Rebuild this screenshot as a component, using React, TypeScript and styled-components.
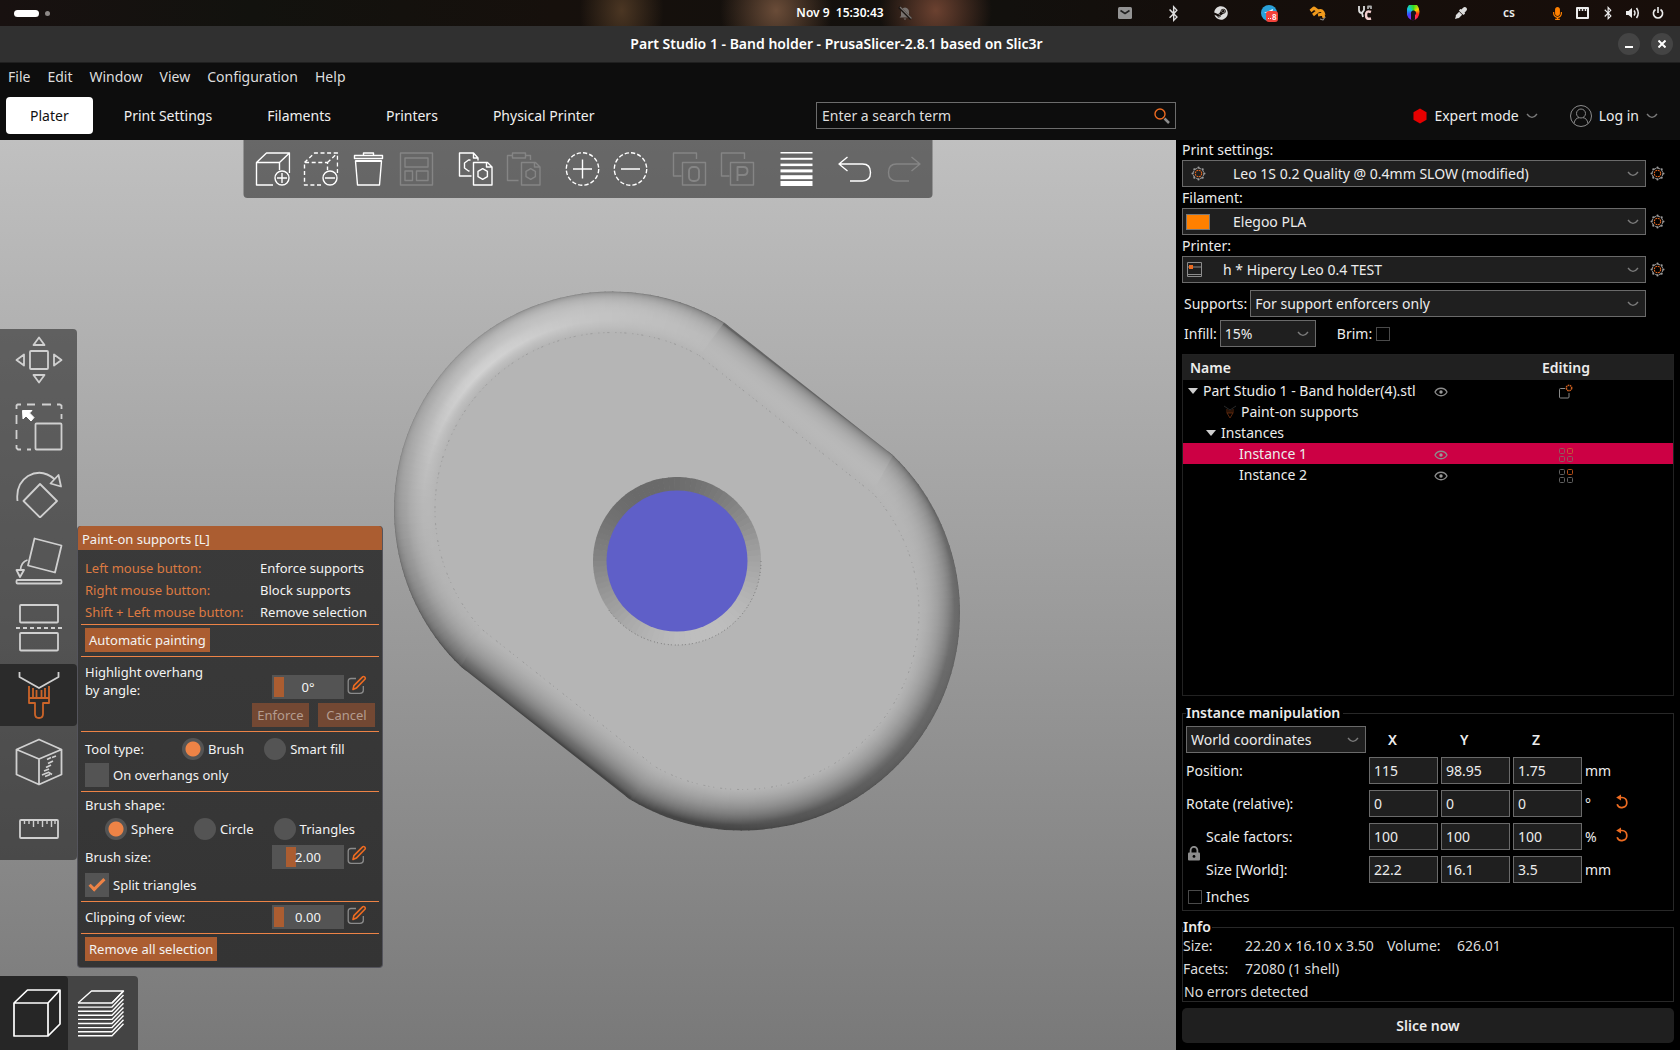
import React, { useState } from "react";
import styled, { createGlobalStyle, css } from "styled-components";
import { FaBluetoothB, FaEyeDropper, FaMicrophone, FaSteam } from "react-icons/fa";

const GlobalStyle = createGlobalStyle`
  *, *::before, *::after { box-sizing: border-box; }
  body { margin: 0; background: #000; }
  body, button, input, select, table {
    font-family: "Noto Sans", "Open Sans", sans-serif;
    font-size: 14px;
    line-height: 20px;
    color: #ececec;
  }
  button { border: 0; padding: 0; background: none; cursor: pointer; }
`;

const accent = "#ed6b21";

/* ------------------------------------------------------------------ shell */

const Shell = styled.div`
  height: 100vh;
  display: grid;
  grid-template-rows: 26px 37px 28px 49px minmax(0, 1fr);
  background: #0d0d0d;
  overflow: hidden;
`;

const StatusBar = styled.header`
  display: grid;
  grid-template-columns: 1fr auto 1fr;
  align-items: center;
  background:
    radial-gradient(ellipse 42px 60px at 37% 40%, #4b3623 0, transparent 100%),
    radial-gradient(ellipse 56px 60px at 46.2% 40%, #6a4c38 0, transparent 100%),
    radial-gradient(ellipse 56px 60px at 55.7% 40%, #6b4130 0, transparent 100%),
    linear-gradient(90deg, #181110 0, #12120e 15%, #16100c 33%, #12100d 60%, #140e0b 70%, #180e0a 100%);
`;

const Workspaces = styled.div`
  display: flex;
  align-items: center;
  gap: 6px;
  padding-left: 14px;
`;

const WorkspaceDot = styled.span<{ $active?: boolean }>`
  width: ${(p) => (p.$active ? 25 : 5)}px;
  height: ${(p) => (p.$active ? 7 : 5)}px;
  border-radius: 4px;
  background: ${(p) => (p.$active ? "#fff" : "#8d8987")};
`;

const Clock = styled.time`
  font-size: 12px;
  font-weight: 600;
  white-space: pre;
  color: #fff;
`;

const StatusRight = styled.div`
  display: flex;
  align-items: center;
  padding: 0 10px 0 14px;
`;

const Tray = styled.div`
  display: grid;
  grid-auto-flow: column;
  grid-auto-columns: 48px;
  margin: 0 12px 0 auto;
  justify-items: center;
  align-items: center;
  font-size: 12px;
  font-weight: 600;
`;

const ColorWheel = styled.span`
  width: 13px;
  height: 17px;
  background:
    radial-gradient(circle at 50% 47%, #15151a 2px, transparent 3px),
    linear-gradient(#15151a, #15151a) 50% 100% / 4px 9px no-repeat,
    conic-gradient(from 180deg at 50% 40%, #b012f0, #3848ff, #11c9e0, #35e01e, #f5d800, #ff2a1a, #ff2a80);
  clip-path: ellipse(50% 50% at 50% 42%);
`;

const SystemIcons = styled.div`
  display: grid;
  grid-auto-flow: column;
  grid-auto-columns: 25px;
  justify-items: center;
  align-items: center;
`;

const TitleBar = styled.div`
  display: grid;
  grid-template-columns: 1fr auto 1fr;
  align-items: center;
  padding-right: 7px;
  background: #303030;
  border-bottom: 1px solid #1f1f1f;
`;

const WindowTitle = styled.h1`
  grid-column: 2;
  margin: 0;
  font-size: 14px;
  line-height: 20px;
  font-weight: 600;
  color: #fff;
`;

const WindowButtons = styled.div`
  display: flex;
  justify-content: flex-end;
  gap: 11px;
`;

const WindowButton = styled.button`
  width: 22px;
  height: 22px;
  border-radius: 50%;
  background: #444;
  display: grid;
  place-items: center;
`;

const MenuBar = styled.nav`
  display: flex;
  align-items: center;
  gap: 17px;
  padding-left: 8px;
`;

const MenuButton = styled.button`
  color: #ddd;
`;

const TabBar = styled.div`
  display: grid;
  grid-template-columns: minmax(0, 1fr) 360px 504px;
  align-items: center;
`;

const Tabs = styled.div`
  display: flex;
  gap: 7px;
  padding-left: 6px;
`;

const Tab = styled.button<{ $active?: boolean }>`
  height: 37px;
  padding: 0 24px;
  border-radius: 4px;
  color: ${(p) => (p.$active ? "#111" : "#f0f0f0")};
  background: ${(p) => (p.$active ? "#fff" : "transparent")};
  white-space: nowrap;
`;

const SearchBox = styled.label`
  display: flex;
  align-items: center;
  height: 27px;
  padding: 0 5px;
  border: 1px solid #6c6c6c;
`;

const SearchInput = styled.input`
  flex: 1;
  min-width: 0;
  border: 0;
  padding: 0;
  outline: 0;
  background: none;
  &::placeholder { color: #dedede; opacity: 1; }
`;

const ModeArea = styled.div`
  display: flex;
  justify-content: flex-end;
  gap: 32px;
  padding-right: 22px;
`;

const ModeButton = styled.button`
  display: flex;
  align-items: center;
  gap: 7px;
`;

const Main = styled.main`
  display: grid;
  grid-template-columns: minmax(0, 1fr) 504px;
  min-height: 0;
`;

/* --------------------------------------------------------------- 3D scene */

const Scene = styled.section`
  position: relative;
  background: linear-gradient(#c0c0c0, #797979);
  overflow: hidden;
`;

const ModelSvg = styled.svg`
  display: block;
  width: 100%;
  height: 100%;
`;

const Overlay = styled.div`
  position: absolute;
  inset: 0;
`;

const TopTools = styled.div`
  position: absolute;
  top: 0;
  left: 50%;
  transform: translateX(-50%);
  display: flex;
  gap: 11px;
  height: 58px;
  padding: 0 5px;
  border-radius: 0 0 4px 4px;
  background: rgba(0, 0, 0, 0.46);
`;

const ToolGroup = styled.div`
  display: flex;
`;

const TopTool = styled.button`
  width: 48px;
  display: grid;
  place-items: center;
  color: #fff;
  &:disabled { color: #858585; }
`;

const LeftTools = styled.div`
  position: absolute;
  left: 0;
  top: 189px;
  width: 77px;
  display: flex;
  flex-direction: column;
  gap: 5px;
  border-radius: 0 4px 4px 0;
  background: rgba(0, 0, 0, 0.46);
`;

const LeftTool = styled.button<{ $active?: boolean }>`
  height: 62px;
  display: grid;
  place-items: center;
  border-radius: 0 4px 4px 0;
  color: #d0d0d0;
  background: ${(p) => (p.$active ? "#2b2b2b" : "transparent")};
`;

const ViewTools = styled.div`
  position: absolute;
  left: 0;
  bottom: 0;
  display: flex;
  height: 74px;
  border-radius: 0 4px 0 0;
  background: #444;
`;

const ViewTool = styled.button<{ $active?: boolean }>`
  width: ${(p) => (p.$active ? 68 : 70)}px;
  padding: ${(p) => (p.$active ? "0 0 0 6px" : "0 4px 0 0")};
  display: grid;
  place-items: center;
  color: #fff;
  border-radius: 0 4px 0 0;
  background: ${(p) => (p.$active ? "#262626" : "transparent")};
`;

/* ---------------------------------------------------- paint-on tool window */

const PaintWindow = styled.section`
  position: absolute;
  left: 77px;
  top: 386px;
  width: 306px;
  border: 1px solid #54545c;
  border-top: 0;
  border-radius: 4px;
  background: linear-gradient(#3a3a3a, #343434);
  overflow: hidden;
  padding-bottom: 2px;
  &, button { font-size: 13px; line-height: 18px; color: #f3f3f3; }
`;

const PaintTitle = styled.h2`
  margin: 0 0 7px;
  padding: 4px 4px 2px;
  font-size: 13px;
  line-height: 18px;
  font-weight: 400;
  background: #ab5d31;
`;

const PaintBlock = styled.div<{ $tight?: boolean }>`
  margin: 0 3px;
  padding: ${(p) => (p.$tight ? "0 4px 1px" : "3px 4px 4px")};
  border-bottom: 1px solid #ed8346;
  &:last-child { border-bottom: 0; }
`;

const Hints = styled.dl`
  display: grid;
  grid-template-columns: 175px 1fr;
  margin: 0;
  line-height: 22px;
  dt { color: #dd7a42; }
  dd { margin: 0; }
`;

const PaintButton = styled.button<{ $w?: number }>`
  height: 24px;
  min-width: ${(p) => p.$w ?? 0}px;
  padding: 0 4px;
  background: #ab5d31;
  && { line-height: 24px; }
  &&:disabled { background: #734833; color: #b39c8f; }
`;

const PaintRow = styled.div<{ $h?: number; $end?: boolean; $after?: number }>`
  display: flex;
  align-items: ${(p) => (p.$end ? "flex-end" : "center")};
  height: ${(p) => p.$h ?? 24}px;
  margin-bottom: ${(p) => p.$after ?? 0}px;
`;

const RowEnd = styled.div<{ $gap?: number; $pad?: number }>`
  margin-left: auto;
  display: flex;
  align-items: center;
  gap: ${(p) => p.$gap ?? 3}px;
  padding-right: ${(p) => p.$pad ?? 8}px;
`;

const Slider = styled.label`
  display: grid;
  width: 72px;
  height: 24px;
  background: #545454;
  > * { grid-area: 1 / 1; }
  output { place-self: center; pointer-events: none; z-index: 1; }
`;

const SliderInput = styled.input`
  appearance: none;
  width: 72px;
  height: 24px;
  margin: 0;
  padding: 2px;
  background: none;
  &::-webkit-slider-thumb {
    appearance: none;
    width: 10px;
    height: 20px;
    background: #ab5d31;
  }
`;

const Choice = styled.label`
  display: inline-flex;
  align-items: center;
  gap: 4px;
  white-space: nowrap;
`;

const Radio = styled.input`
  appearance: none;
  width: 22px;
  height: 22px;
  margin: 0;
  border-radius: 50%;
  background: #545454;
  &:checked { background: radial-gradient(circle, #ed8346 7px, #545454 8px); }
`;

const RadioRow = styled.div<{ $shape?: boolean }>`
  display: flex;
  align-items: center;
  gap: 20px;
  height: 28px;
  padding-left: ${(p) => (p.$shape ? 20 : 0)}px;
  margin-bottom: ${(p) => (p.$shape ? 2 : 0)}px;
`;

const TickBox = styled.input`
  appearance: none;
  width: 24px;
  height: 24px;
  margin: 0;
  background: #545454;
  display: grid;
  place-items: center;
  &:checked::before {
    content: "";
    width: 16px;
    height: 8px;
    border: solid #ed8346;
    border-width: 0 0 3px 3px;
    transform: translateY(-2px) rotate(-45deg);
  }
`;

const ToolTypeLabel = styled.span`
  width: 77px;
`;

/* -------------------------------------------------------------- side panel */

const Side = styled.aside`
  display: flex;
  flex-direction: column;
  padding: 0 6px 7px;
  background: #000;
  min-height: 0;
`;

const Presets = styled.div`
  display: grid;
  grid-template-columns: minmax(0, 1fr) 24px;
  column-gap: 4px;
  > label { grid-column: 1 / -1; }
  > label + * + button + label, > button + label { margin-top: 1px; }
  > button { display: grid; place-items: center start; }
`;

const ComboFrame = styled.div<{ $w?: number }>`
  display: grid;
  align-items: center;
  height: 27px;
  ${(p) => (p.$w ? css`width: ${p.$w}px;` : css`flex: 1;`)}
  border: 1px solid #6a6a6a;
  background: #1f1f1f;
  > * { grid-area: 1 / 1; }
  > svg { pointer-events: none; }
  > svg:last-child { justify-self: end; margin-right: 6px; }
`;

const ComboSelect = styled.select<{ $pad?: number }>`
  appearance: none;
  width: 100%;
  height: 25px;
  margin: 0;
  border: 0;
  padding: 0 28px 0 ${(p) => p.$pad ?? 4}px;
  background: none;
`;

const Swatch = styled.span`
  width: 24px;
  height: 16px;
  margin-left: 3px;
  border: 1px solid #777;
  background: #ff8000;
  pointer-events: none;
`;

const OptionRow = styled.div<{ $top: number }>`
  display: flex;
  align-items: center;
  gap: 3px;
  margin-top: ${(p) => p.$top}px;
  padding: 0 28px 0 2px;
`;

const DarkCheck = styled.input`
  appearance: none;
  width: 14px;
  height: 14px;
  margin: 0;
  border: 1px solid #4a4a4a;
  background: #000;
`;

const CheckLabel = styled.label<{ $ml?: number }>`
  display: inline-flex;
  align-items: center;
  gap: 4px;
  margin-left: ${(p) => p.$ml ?? 0}px;
`;

const TreeFrame = styled.div`
  flex: 1;
  min-height: 0;
  margin-top: 7px;
  border: 1px solid #222;
`;

const TreeTable = styled.table`
  width: 100%;
  border-collapse: collapse;
  table-layout: fixed;
  th { height: 25px; padding: 0; background: #202020; font-weight: 600; text-align: left; }
  th:nth-child(2) { width: 25px; }
  th:first-child { padding-left: 7px; }
  th:last-child { width: 214px; text-align: center; }
  td { height: 21px; padding: 0; }
  td:last-child { text-align: center; }
  svg { display: inline-block; vertical-align: middle; flex: none; }
`;

const TreeRow = styled.tr<{ $selected?: boolean }>`
  background: ${(p) => (p.$selected ? "#cc0044" : "transparent")};
`;

const TreeCell = styled.div<{ $indent: number }>`
  display: flex;
  align-items: center;
  gap: 5px;
  padding-left: ${(p) => p.$indent}px;
  white-space: nowrap;
`;

const Group = styled.fieldset<{ $inset?: boolean }>`
  min-width: 0;
  margin: ${(p) => (p.$inset ? 7 : 6)}px 0 0;
  padding: ${(p) => (p.$inset ? "3px 3px 3px" : "0")};
  border: 1px solid #282828;
  legend {
    padding: 0 ${(p) => (p.$inset ? 3 : 1)}px 0 0;
    font-weight: 600;
    line-height: 20px;
  }
`;

const AxisGrid = styled.div`
  display: grid;
  grid-template-columns: 20px 157px repeat(3, 69px) 26px 16px;
  column-gap: 3px;
  row-gap: 6px;
  align-items: center;
`;

const AxisHead = styled.div`
  display: grid;
  grid-template-columns: 180px repeat(3, 69px);
  column-gap: 3px;
  align-items: center;
  margin-bottom: 4px;
  b { padding-left: 19px; font-weight: 600; }
`;

const AxisLabel = styled.span<{ $wide?: boolean }>`
  grid-column: ${(p) => (p.$wide ? "1 / span 2" : "2")};
  ${(p) => !p.$wide && css`margin-left: -3px;`}
`;

const LockButton = styled.button`
  grid-column: 1;
  grid-row: 3 / span 2;
  width: 16px;
  display: grid;
  place-items: center;
`;

const NumberBox = styled.input`
  width: 100%;
  height: 27px;
  padding: 0 4px;
  border: 1px solid #6a6a6a;
  background: #1f1f1f;
`;

const ResetButton = styled.button`
  display: grid;
  place-items: start center;
  height: 20px;
`;

const InchesRow = styled.div`
  display: flex;
  padding: 4px 0 0 2px;
`;

const InfoList = styled.div`
  display: grid;
  grid-template-columns: 62px 142px 70px 1fr;
  row-gap: 5px;
  line-height: 18px;
  color: #dcdcdc;
  p { grid-column: 1 / -1; margin: 0; padding-left: 1px; }
`;

const SliceButton = styled.button`
  height: 35px;
  margin-top: 6px;
  border-radius: 5px;
  background: #1f1f1f;
  font-weight: 600;
`;

/* ------------------------------------------------------------------- icons */

type IconProps = { w?: number; h?: number; sw?: number; children?: React.ReactNode };
const Icon = ({ w = 36, h = w, sw = 1.4, children }: IconProps) => (
  <svg width={w} height={h} viewBox={`0 0 ${w} ${h}`} fill="none" stroke="currentColor" strokeWidth={sw}
    strokeLinejoin="round" aria-hidden="true">{children}</svg>
);

const Chevron = () => (
  <Icon w={12} h={6} sw={1.3}><path d="M1 1 Q3.5 4.4 6 4.4 T11 1" stroke="#7c7c7c" /></Icon>
);

const Gear = () => {
  const dots = Array.from({ length: 8 }, (_, i) => {
    const a = (i * Math.PI) / 4;
    return <circle key={i} cx={7.5 + 5.9 * Math.cos(a)} cy={7.5 + 5.9 * Math.sin(a)} r="1.1" fill="#9a9a9a" stroke="none" />;
  });
  return (
    <Icon w={15} sw={1.1}>
      <circle cx="7.5" cy="7.5" r="5.3" stroke="#8a8a8a" strokeDasharray="2.6 1.5" />
      {dots}
      <circle cx="7.5" cy="7.5" r="3.2" stroke="#e0661f" strokeDasharray="1.8 0.7" />
    </Icon>
  );
};

const Eye = () => (
  <Icon w={14} h={10} sw={1.3}>
    <path d="M1 5 C3.5 0 10.5 0 13 5 C10.5 10 3.5 10 1 5Z" stroke="#8c8c8c" />
    <circle cx="7" cy="5" r="1.7" fill="#9a9a9a" stroke="none" />
  </Icon>
);

const InstanceIcon = ({ on }: { on?: boolean }) => (
  <Icon w={16} sw={1}>
    {[[1, 1], [1, 9], [9, 9]].map(([x, y]) => (
      <rect key={`${x}${y}`} x={x + 0.5} y={y + 0.5} width="5" height="5" rx="1" stroke={on ? "#8f5a5f" : "#606060"} />
    ))}
    <rect x="9.5" y="1.5" width="5" height="5" rx="1" stroke={on ? "#c45a35" : "#b85018"} />
  </Icon>
);

const ObjectIcon = () => (
  <Icon w={16} sw={1}>
    <path d="M7 4.5H2.5Q1.5 4.5 1.5 5.5V13Q1.5 14 2.5 14H10Q11 14 11 13V9" stroke="#8a8a8a" />
    <circle cx="11" cy="4" r="2.7" stroke="#d0601f" strokeWidth="1.5" strokeDasharray="1.6 0.6" />
  </Icon>
);

const Triangle = () => <Icon w={10} h={6} sw={0}><path d="M0 0H10L5 6Z" fill="#cfcfcf" /></Icon>;

const Undo = () => (
  <Icon w={14} h={16} sw={1.7}>
    <path d="M5.6 3.5 H7 A5 5 0 1 1 2.1 10.2" stroke={accent} />
    <path d="M1.2 3.5L6 0.6V6.4Z" fill={accent} stroke="none" />
  </Icon>
);

const Lock = () => (
  <Icon w={12} h={15} sw={1.8}>
    <path d="M2.6 7V4.2A3.4 3.4 0 0 1 9.4 4.2V7" stroke="#8d8d8d" />
    <rect x="0" y="6.5" width="12" height="8" rx="1" fill="#8d8d8d" stroke="none" />
    <circle cx="6" cy="10.4" r="1.4" fill="#000" stroke="none" />
  </Icon>
);

const EditIcon = () => (
  <Icon w={20} sw={1.3}>
    <path d="M9 3.5H4Q1.2 3.5 1.2 6.3V15.5Q1.2 18.3 4 18.3H13Q16.3 18.3 16.3 15.5V11" stroke="#8b8b8b" />
    <path d="M6 14.5L6.9 10.6L15.6 1.9Q16.6 1 17.7 2Q18.8 3.1 17.9 4.2L9.3 13.1Z" stroke={accent} strokeWidth="1.6" />
  </Icon>
);

const hexagon = (cx: number, cy: number, r: number) =>
  `M${cx} ${cy - r}L${cx + r * 0.87} ${cy - r / 2}V${cy + r / 2}L${cx} ${cy + r}L${cx - r * 0.87} ${cy + r / 2}V${cy - r / 2}Z`;

const AddIcon = () => (
  <Icon>
    <path d="M18.5 34H2V11.5H25V19M2 11.5L12 2H35V22M25 11.5L35 2" />
    <circle cx="27.5" cy="27" r="7" /><path d="M22.5 27H32.5M27.5 22V32" />
  </Icon>
);
const DeleteIcon = () => (
  <Icon>
    <path d="M18.5 34H2V11.5H25V19M2 11.5L12 2H35V22M25 11.5L35 2" strokeDasharray="4 2.6" />
    <circle cx="27.5" cy="27" r="7" /><path d="M22.5 27H32.5" />
  </Icon>
);
const TrashIcon = () => (
  <Icon>
    <path d="M4 4.5H32V7.5H4ZM13 4.5V2H23V4.5" /><path d="M5 10H31L29 34H7Z" /><path d="M5 10H31" strokeWidth="2.2" />
  </Icon>
);
const ArrangeIcon = () => (
  <Icon><path d="M2 2H34V34H2ZM6.5 7H29.5V16H6.5ZM6.5 20H14V29.5H6.5ZM18 20H29.5V29.5H18Z" /></Icon>
);
const CopyIcon = () => (
  <Icon>
    <path d="M14 25H2V2H16L20.5 7V9.5M16 2V7H20.5M13 9L11 9L7 12V17L11 20H12" />
    <path d="M16 11.5H30L34.5 16V34H16ZM29 11.5V16H34" /><path d={hexagon(25.2, 23, 5.4)} />
  </Icon>
);
const PasteIcon = () => (
  <Icon>
    <path d="M13 29.5H2V4.5H7M7 2H20V7H7ZM20 4.5H25V9" />
    <path d="M16 11.5H30L34.5 16V34H16ZM29 11.5V16H34" /><path d={hexagon(25.2, 23, 5.4)} />
  </Icon>
);
const RoundIcon = ({ plus }: { plus?: boolean }) => (
  <Icon><circle cx="18" cy="18" r="16.2" strokeDasharray="4.3 2.062" /><path d={plus ? "M8.5 18H27.5M18 8.5V27.5" : "M8.5 18H27.5"} /></Icon>
);
const SplitIcon = ({ part }: { part?: boolean }) => (
  <Icon>
    <path d="M10 25H2V2H25V8" /><path d="M11 11.5H34V34H11Z" />
    {part ? <path d="M18 30V16H24Q28 16 28 20T24 24H18" strokeWidth="1.9" />
      : <rect x="17.5" y="16" width="10" height="14" rx="4" strokeWidth="1.9" />}
  </Icon>
);
const LayersIcon = () => (
  <Icon sw={0}>
    {[1.5, 2, 2.5, 3, 4, 5].map((h, i) => <rect key={i} x="2" y={1 + i * 5.8} width="32" height={h} fill="currentColor" />)}
  </Icon>
);
const UndoArrow = ({ redo }: { redo?: boolean }) => (
  <Icon><path transform={redo ? "matrix(-1 0 0 1 36 0)" : undefined} d="M10 6L1.5 13L10 20M1.5 13H25Q33 13 33 21.5T25 30H12.5" /></Icon>
);

const MoveIcon = () => (
  <Icon w={48} sw={1.8}>
    <rect x="15" y="15" width="18" height="18" rx="1" />
    <path d="M24 1.5L29.5 9H18.5ZM24 46.5L29.5 39H18.5ZM1.5 24L9 18.5V29.5ZM46.5 24L39 18.5V29.5Z" />
  </Icon>
);
const ScaleIcon = () => (
  <Icon w={48} sw={1.8}>
    <path d="M1.5 6V2.5L2.5 1.5H6M12 1.5H20M27 1.5H36M42 1.5H45L46.5 2.5V6M46.5 11V16M1.5 12V21M1.5 27V36M1.5 42V45L3 46.5H6M12 46.5H16" />
    <rect x="20.5" y="20.5" width="26" height="26" rx="1" />
    <path d="M7.5 7.5H17L14.5 10L19 14.5L16 18L11 13L8 16Z" fill="#fff" stroke="#fff" strokeWidth="1" />
  </Icon>
);
const RotateIcon = () => (
  <Icon w={48} sw={1.8}>
    <path d="M2.5 31Q.5 14 13 6Q27-2 40 9.5M25 14L42 31L25 47.5L8.5 31ZM43.5 5L46 16.5L35.5 13.5Z" />
  </Icon>
);
const FlattenIcon = () => (
  <Icon w={48} sw={1.8}>
    <path d="M19.5 1.5L46.5 8.5L40 35.5L13 28.5ZM12.5 23Q6 25 5.5 33M1.5 33H9L5 40Z" />
    <rect x="1.5" y="43" width="45" height="3.5" rx="1" />
  </Icon>
);
const CutIcon = () => (
  <Icon w={48} sw={1.8}>
    <rect x="5" y="1" width="38" height="17.5" rx="1" /><rect x="5" y="29" width="38" height="17.5" rx="1" />
    <path d="M1 24H47" strokeDasharray="4 3" />
  </Icon>
);
const PaintIcon = () => (
  <Icon w={48} sw={1.8}>
    <path d="M4.5 1V6L24 17L43.5 6V1" />
    <path d="M14 15V27H34V15M18 17V27M21.5 19V27M26.5 19V27M30 17V27M14 27V32H20V43Q20 47 24 47T28 43V32H34V27" stroke="#cb6429" />
  </Icon>
);
const SeamIcon = () => (
  <Icon w={48} sw={1.8}>
    <path d="M24 1.5L46.5 11.5V36.5L24 46.5L1.5 36.5V11.5ZM1.5 11.5L24 21L46.5 11.5M24 21V46.5" />
    <path d="M32 21.5L36 19.5M37 19.5L41 18M33 25.500L38 23M31 29.5L36 27M29 33L34 31M27 37L33 34.500M30 38.5L35 36.5M33 34L37 36.500" strokeWidth="1.7" />
  </Icon>
);
const MeasureIcon = () => (
  <Icon w={48} sw={1.8}>
    <rect x="5" y="15" width="38" height="18" rx="1" />
    <path d="M9.5 15V19M14 15V19M18.5 15V22M23 15V19M27.5 15V22M32 15V19M36.5 15V22M40 15V19" strokeWidth="1.4" />
  </Icon>
);
const CubeIcon = () => (
  <Icon w={48} sw={1.7}><path d="M1 14H35V47H1ZM1 14L14.500 1H47V35L35 47M35 14L47 1" /></Icon>
);
const SlicedIcon = () => (
  <Icon w={48} sw={1.4}>
    <path d="M1 14L14.5 2H46.5L35 14" />
    {Array.from({ length: 9 }, (_, i) => <path key={i} d={`M1 ${14 + i * 4.1}H35L46.5 ${2 + i * 4.1}`} />)}
  </Icon>
);

const BrushMini = () => (
  <Icon w={12} h={14} sw={0.8}>
    <path d="M0 1L6 5L12 1" stroke="#333" /><path d="M3 4V8H9V4M3 8L6 13L9 8M5 5V8M7 5V8" stroke="#6e3010" />
  </Icon>
);

/* ------------------------------------------------------------- 3D model */

type Vec = [number, number, number];
type Point = [number, number];
const dot = (a: Vec, b: Vec) => a[0] * b[0] + a[1] * b[1] + a[2] * b[2];
const TOP_LIGHT: Vec = [-0.4575, 0.4575, 0.7625];
const FRONT_LIGHT: Vec = [0.6985, 0.1397, 0.6985];

/** Grey level of a surface seen from above, lit by a top and a front light. */
function shade(n: Vec) {
  const top = Math.max(dot(n, TOP_LIGHT), 0);
  const front = Math.max(dot(n, FRONT_LIGHT), 0);
  const mirror = Math.max(2 * dot(n, TOP_LIGHT) * n[2] - TOP_LIGHT[2], 0);
  const level = 0.075 * mirror ** 20 + 0.896 * (0.3 + 0.48 * top + 0.18 * front);
  const v = Math.round(level * 255);
  return `rgb(${v},${v},${v})`;
}

const rad = (deg: number) => (deg * Math.PI) / 180;
const polar = ([cx, cy]: Point, r: number, deg: number) =>
  `${(cx + r * Math.cos(rad(deg))).toFixed(2)} ${(cy + r * Math.sin(rad(deg))).toFixed(2)}`;

const FILLET_STOPS = [0, 0.15, 0.3, 0.45, 0.6, 0.7, 0.8, 0.87, 0.93, 0.97, 1];
const R_IN = 177;
const R_OUT = 218;
const NW: Point = [612, 509.5];
const SE: Point = [742, 612.5];

/** Two arcs joined by straight sides; a and b are the angles where a side meets each arc. */
const stadium = (r: number, a: number, b: number) =>
  `M${polar(NW, r, a)}L${polar(SE, r, b)}A${r} ${r} 0 0 1 ${polar(SE, r, a + 180)}` +
  `L${polar(NW, r, b + 180)}A${r} ${r} 0 0 1 ${polar(NW, r, a)}Z`;

const OUTLINE = stadium(R_OUT, -59, -46.3);
const PLATEAU = stadium(R_IN, -60.4, -42.4);
const side = (from: Point, to: Point, turn: number) =>
  `M${polar(from, R_OUT + 2, turn - 59)}L${polar(to, R_OUT + 2, turn - 46.3)}` +
  `L${polar(to, R_IN - 2, turn - 42.4)}L${polar(from, R_IN - 2, turn - 60.4)}Z`;

const filletStops = (ux: number, uy: number, from: number) =>
  FILLET_STOPS.map((t) => (
    <stop key={t} offset={from + (1 - from) * t}
      stopColor={shade([ux * t, -uy * t, Math.sqrt(1 - t * t)])} />
  ));

function FilletArc({ id, center, start, end }: { id: string; center: Point; start: number; end: number }) {
  const step = 2;
  const wedges = [];
  for (let a = start; a < end; a += step) {
    const mid = rad(a + step / 2);
    wedges.push(
      <g key={a}>
        <radialGradient id={`${id}${a}`} gradientUnits="userSpaceOnUse" cx={center[0]} cy={center[1]} r={R_OUT}>
          {filletStops(Math.cos(mid), Math.sin(mid), R_IN / R_OUT)}
        </radialGradient>
        <path fill={`url(#${id}${a})`}
          d={`M${polar(center, R_IN - 4, a)}L${polar(center, R_OUT + 3, a)}L${polar(center, R_OUT + 3, a + step + 0.4)}L${polar(center, R_IN - 4, a + step + 0.4)}Z`} />
      </g>
    );
  }
  return <>{wedges}</>;
}

const Model = () => {
  const hole: Point = [677, 561];
  const bevel = [];
  for (let a = 0; a < 360; a += 4) {
    const m = rad(a + 2);
    bevel.push(
      <path key={a} fill={shade([-Math.cos(m) * 0.707, Math.sin(m) * 0.707, 0.707])}
        d={`M677 561L${polar(hole, 84, a)}A84 84 0 0 1 ${polar(hole, 84, a + 4.4)}Z`} />
    );
  }
  return (
    <ModelSvg viewBox="0 140 1176 910" role="img" aria-label="Band holder model">
      <defs>
        <clipPath id="outline"><path d={OUTLINE} /></clipPath>
        <linearGradient id="sideTop" gradientUnits="userSpaceOnUse" x1="786" y1="423" x2="810.4" y2="391.3">
          {filletStops(0.61, -0.792, 0)}
        </linearGradient>
        <linearGradient id="sideBottom" gradientUnits="userSpaceOnUse" x1="568" y1="699" x2="543.6" y2="730.7">
          {filletStops(-0.61, 0.792, 0)}
        </linearGradient>
      </defs>
      <g clipPath="url(#outline)">
        <FilletArc id="nw" center={NW} start={132} end={302} />
        <FilletArc id="se" center={SE} start={-48} end={122} />
        <path fill="url(#sideTop)" d={side(NW, SE, 0)} />
        <path fill="url(#sideBottom)" d={side(SE, NW, 180)} />
      </g>
      <path d={PLATEAU} fill={shade([0, 0, 1])} stroke="#9a9a9a" strokeWidth="1" strokeDasharray="1 3 2 6 1 4" />
      {bevel}
      <path d={`M${polar(hole, 84, 0)}A84 84 0 0 1 ${polar(hole, 84, 145)}`} fill="none" stroke="#777" strokeWidth="1" strokeDasharray="1 3 1 2" />
      <circle cx="677" cy="561" r="70.5" fill="#5f5fc8" />
    </ModelSvg>
  );
};

/* -------------------------------------------------------------- composites */

const Combo = ({ id, value, width, pad, lead, label }: {
  id?: string; value: string; width?: number; pad?: number; lead?: React.ReactNode; label?: string;
}) => (
  <ComboFrame $w={width}>
    <ComboSelect id={id} $pad={pad} aria-label={label}><option>{value}</option></ComboSelect>
    {lead}
    <Chevron />
  </ComboFrame>
);

const LeadIcon = styled.svg<{ $left: number }>`
  margin-left: ${(p) => p.$left}px;
`;

const GearLead = () => (
  <LeadIcon $left={8} width="15" height="15"><Gear /></LeadIcon>
);
const PrinterLead = () => (
  <LeadIcon $left={4} width="15" height="15" fill="none" stroke="#8c8c8c">
    <path d="M.5 .5H14.5V14.5H.5ZM.5 5H14.5M.5 12.5H14.5" /><rect x="2" y="3" width="4" height="4" fill={accent} stroke="none" />
  </LeadIcon>
);

const ValueSlider = ({ label, text, position }: { label: string; text: string; position: number }) => (
  <RowEnd>
    <Slider>
      <SliderInput type="range" min={0} max={100} defaultValue={position} aria-label={label} />
      <output>{text}</output>
    </Slider>
    <button aria-label={`Edit ${label}`}><EditIcon /></button>
  </RowEnd>
);

const RadioChoice = ({ name, label, checked }: { name: string; label: string; checked?: boolean }) => (
  <Choice><Radio type="radio" name={name} defaultChecked={checked} />{label}</Choice>
);

const axisRows = [
  { label: "Position:", values: ["115", "98.95", "1.75"], unit: "mm", wide: true },
  { label: "Rotate (relative):", values: ["0", "0", "0"], unit: "°", wide: true, reset: true },
  { label: "Scale factors:", values: ["100", "100", "100"], unit: "%", reset: true },
  { label: "Size [World]:", values: ["22.2", "16.1", "3.5"], unit: "mm" },
];

const leftTools = [
  ["Move", MoveIcon], ["Scale", ScaleIcon], ["Rotate", RotateIcon], ["Place on face", FlattenIcon],
  ["Cut", CutIcon], ["Paint-on supports", PaintIcon], ["Seam painting", SeamIcon], ["Measure", MeasureIcon],
] as const;

export default function App() {
  const [tab, setTab] = useState("Plater");
  const tabs = ["Plater", "Print Settings", "Filaments", "Printers", "Physical Printer"];
  return (
    <>
      <GlobalStyle />
      <Shell>
        <StatusBar>
          <Workspaces><WorkspaceDot $active /><WorkspaceDot /></Workspaces>
          <Clock>{"Nov 9  15:30:43"}</Clock>
          <StatusRight>
            <Icon w={14} sw={0}>
              <path d="M3 10V6Q3 2 7 1.5Q11 2 11 6V10L12.5 11.5H1.5ZM5.5 12.5H8.5L7 14Z" fill="#77716e" />
              <path d="M1 1L13 13" stroke="#1b1613" strokeWidth="2.5" /><path d="M2 1L13.5 12.5" stroke="#77716e" strokeWidth="1.2" />
            </Icon>
            <Tray>
              <Icon w={14} h={12} sw={1.6}><rect width="14" height="12" rx="1.5" fill="#949494" stroke="none" /><path d="M2.5 3.5L7 6.5L11.5 3.5" stroke="#222" /></Icon>
              <FaBluetoothB size={17} color="#ddd" />
              <FaSteam size={14} color="#ddd" />
              <Icon w={17} sw={0}>
                <circle cx="8" cy="8" r="8" fill="#2aa1da" /><path d="M3 8L12 4L11 9L8 8Z" fill="#fff" />
                <rect x="5" y="6" width="12" height="11" rx="3" fill="#f2423a" />
                <path d="M7 13.5H8M9 13.5H10" stroke="#fff" strokeWidth="1" />
                <text x="11" y="14.5" fontSize="8" fill="#fff">8</text>
              </Icon>
              <Icon w={17} h={15} sw={3}>
                <path d="M1.5 5L5 2L9 5L4 9M9 5Q14 3 15 9M9 9L14 8L15 12" stroke="#f09a1c" /><path d="M11 13L14 14L16 11" stroke="#888" strokeWidth="1.2" />
              </Icon>
              <Icon w={17} h={16} sw={1.8}>
                <path d="M2 1V5Q2 8 5 8M7 1V5L5 8L6 12" stroke="#ddd" /><path d="M14 7Q9 5 9 10T14 13.5" stroke="#f3cfcf" strokeWidth="2.5" /><path d="M11 4V1.5H14V4" stroke="#aaa" />
              </Icon>
              <ColorWheel />
              <FaEyeDropper size={12} color="#ddd" />
              <span>cs</span>
            </Tray>
            <SystemIcons>
              <FaMicrophone size={13} color="#ff8000" />
              <Icon w={13} h={12} sw={2}><path d="M1 1H12V11H1Z" /><path d="M3.5 2V4M6.5 2V4M9.5 2V4" strokeWidth="1.5" /></Icon>
              <FaBluetoothB size={14} color="#eee" />
              <Icon w={14} h={12} sw={1.5}><path d="M0 4H2.5L6 1V11L2.5 8H0Z" fill="currentColor" stroke="none" /><path d="M8 3.5Q10 6 8 8.5M10.5 1Q14 6 10.5 11" /></Icon>
              <Icon w={12} sw={1.6}><path d="M3.5 2.5A4.6 4.6 0 1 0 8.5 2.5M6 0V6" /></Icon>
            </SystemIcons>
          </StatusRight>
        </StatusBar>

        <TitleBar>
          <WindowTitle>Part Studio 1 - Band holder - PrusaSlicer-2.8.1 based on Slic3r</WindowTitle>
          <WindowButtons>
            <WindowButton aria-label="Minimize"><Icon w={8} sw={2}><path d="M0 7H8" stroke="#fff" /></Icon></WindowButton>
            <WindowButton aria-label="Close"><Icon w={8} sw={2}><path d="M.5 .5L7.5 7.5M7.5 .5L.5 7.5" stroke="#fff" /></Icon></WindowButton>
          </WindowButtons>
        </TitleBar>

        <MenuBar>
          {["File", "Edit", "Window", "View", "Configuration", "Help"].map((m) => <MenuButton key={m}>{m}</MenuButton>)}
        </MenuBar>

        <TabBar>
          <Tabs>
            {tabs.map((t) => <Tab key={t} $active={t === tab} onClick={() => setTab(t)}>{t}</Tab>)}
          </Tabs>
          <SearchBox>
            <SearchInput placeholder="Enter a search term" aria-label="Search" />
            <Icon w={16} sw={1.4}><circle cx="6" cy="6" r="5" stroke={accent} /><path d="M10.5 10.5L15 15" stroke="#8d8d8d" strokeWidth="2.5" /></Icon>
          </SearchBox>
          <ModeArea>
            <ModeButton>
              <Icon w={14} h={16} sw={0}><path d={hexagon(7, 8, 7.5)} fill="#e60000" /></Icon>Expert mode<Chevron />
            </ModeButton>
            <ModeButton>
              <Icon w={22} sw={1}><g stroke="#8b8b8b"><circle cx="11" cy="11" r="10.5" /><circle cx="11" cy="8.5" r="4.5" /><path d="M4 18.5Q5 13 9 12.7M18 18.5Q17 13 13 12.7" /></g></Icon>
              Log in<Chevron />
            </ModeButton>
          </ModeArea>
        </TabBar>

        <Main>
          <Scene>
            <Model />
            <Overlay>
              <TopTools>
                <ToolGroup>
                  <TopTool aria-label="Add"><AddIcon /></TopTool>
                  <TopTool aria-label="Delete"><DeleteIcon /></TopTool>
                  <TopTool aria-label="Delete all"><TrashIcon /></TopTool>
                  <TopTool aria-label="Arrange" disabled><ArrangeIcon /></TopTool>
                </ToolGroup>
                <ToolGroup>
                  <TopTool aria-label="Copy"><CopyIcon /></TopTool>
                  <TopTool aria-label="Paste" disabled><PasteIcon /></TopTool>
                </ToolGroup>
                <ToolGroup>
                  <TopTool aria-label="Add instance"><RoundIcon plus /></TopTool>
                  <TopTool aria-label="Remove instance"><RoundIcon /></TopTool>
                </ToolGroup>
                <ToolGroup>
                  <TopTool aria-label="Split to objects" disabled><SplitIcon /></TopTool>
                  <TopTool aria-label="Split to parts" disabled><SplitIcon part /></TopTool>
                </ToolGroup>
                <ToolGroup>
                  <TopTool aria-label="Variable layer height"><LayersIcon /></TopTool>
                </ToolGroup>
                <ToolGroup>
                  <TopTool aria-label="Undo"><UndoArrow /></TopTool>
                  <TopTool aria-label="Redo" disabled><UndoArrow redo /></TopTool>
                </ToolGroup>
              </TopTools>

              <LeftTools>
                {leftTools.map(([name, Glyph]) => (
                  <LeftTool key={name} aria-label={name} $active={name === "Paint-on supports"}><Glyph /></LeftTool>
                ))}
              </LeftTools>

              <PaintWindow>
                <PaintTitle>Paint-on supports [L]</PaintTitle>
                <PaintBlock $tight>
                  <Hints>
                    <dt>Left mouse button:</dt><dd>Enforce supports</dd>
                    <dt>Right mouse button:</dt><dd>Block supports</dd>
                    <dt>Shift + Left mouse button:</dt><dd>Remove selection</dd>
                  </Hints>
                </PaintBlock>
                <PaintBlock><PaintRow><PaintButton>Automatic painting</PaintButton></PaintRow></PaintBlock>
                <PaintBlock>
                  <PaintRow $h={39} $end $after={4}>
                    <span>Highlight overhang<br />by angle:</span>
                    <ValueSlider label="Highlight overhang by angle" text="0°" position={0} />
                  </PaintRow>
                  <PaintRow>
                    <RowEnd $gap={9} $pad={0}>
                      <PaintButton $w={57} disabled>Enforce</PaintButton>
                      <PaintButton $w={57} disabled>Cancel</PaintButton>
                    </RowEnd>
                  </PaintRow>
                </PaintBlock>
                <PaintBlock>
                  <RadioRow>
                    <ToolTypeLabel>Tool type:</ToolTypeLabel>
                    <RadioChoice name="tool" label="Brush" checked />
                    <RadioChoice name="tool" label="Smart fill" />
                  </RadioRow>
                  <PaintRow><Choice><TickBox type="checkbox" />On overhangs only</Choice></PaintRow>
                </PaintBlock>
                <PaintBlock>
                  <PaintRow $h={20}>Brush shape:</PaintRow>
                  <RadioRow $shape>
                    <RadioChoice name="shape" label="Sphere" checked />
                    <RadioChoice name="shape" label="Circle" />
                    <RadioChoice name="shape" label="Triangles" />
                  </RadioRow>
                  <PaintRow $after={4}>Brush size:<ValueSlider label="Brush size" text="2.00" position={20} /></PaintRow>
                  <PaintRow><Choice><TickBox type="checkbox" defaultChecked />Split triangles</Choice></PaintRow>
                </PaintBlock>
                <PaintBlock>
                  <PaintRow>Clipping of view:<ValueSlider label="Clipping of view" text="0.00" position={0} /></PaintRow>
                </PaintBlock>
                <PaintBlock><PaintRow><PaintButton>Remove all selection</PaintButton></PaintRow></PaintBlock>
              </PaintWindow>

              <ViewTools>
                <ViewTool $active aria-label="3D editor view"><CubeIcon /></ViewTool>
                <ViewTool aria-label="Preview"><SlicedIcon /></ViewTool>
              </ViewTools>
            </Overlay>
          </Scene>

          <Side>
            <Presets>
              <label htmlFor="print">Print settings:</label>
              <Combo id="print" value="Leo 1S 0.2 Quality @ 0.4mm SLOW (modified)" pad={50} lead={<GearLead />} />
              <button aria-label="Edit print settings"><Gear /></button>
              <label htmlFor="filament">Filament:</label>
              <Combo id="filament" value="Elegoo PLA" pad={50} lead={<Swatch />} />
              <button aria-label="Edit filament"><Gear /></button>
              <label htmlFor="printer">Printer:</label>
              <Combo id="printer" value="h * Hipercy Leo 0.4 TEST" pad={40} lead={<PrinterLead />} />
              <button aria-label="Edit printer"><Gear /></button>
            </Presets>
            <OptionRow $top={7}>
              <label htmlFor="supports">Supports:</label>
              <Combo id="supports" value="For support enforcers only" />
            </OptionRow>
            <OptionRow $top={3}>
              <label htmlFor="infill">Infill:</label>
              <Combo id="infill" value="15%" width={96} />
              <CheckLabel $ml={18}>Brim:<DarkCheck type="checkbox" /></CheckLabel>
            </OptionRow>

            <TreeFrame>
              <TreeTable>
                <thead><tr><th>Name</th><th /><th>Editing</th></tr></thead>
                <tbody>
                  <TreeRow>
                    <td><TreeCell $indent={5}><Triangle />Part Studio 1 - Band holder(4).stl</TreeCell></td>
                    <td><Eye /></td><td><ObjectIcon /></td>
                  </TreeRow>
                  <TreeRow><td><TreeCell $indent={41}><BrushMini />Paint-on supports</TreeCell></td><td /><td /></TreeRow>
                  <TreeRow><td><TreeCell $indent={23}><Triangle />Instances</TreeCell></td><td /><td /></TreeRow>
                  <TreeRow $selected><td><TreeCell $indent={56}>Instance 1</TreeCell></td><td><Eye /></td><td><InstanceIcon on /></td></TreeRow>
                  <TreeRow><td><TreeCell $indent={56}>Instance 2</TreeCell></td><td><Eye /></td><td><InstanceIcon /></td></TreeRow>
                </tbody>
              </TreeTable>
            </TreeFrame>

            <Group $inset>
              <legend>Instance manipulation</legend>
              <AxisHead>
                <Combo value="World coordinates" width={180} label="Coordinate system" />
                <b>X</b><b>Y</b><b>Z</b>
              </AxisHead>
              <AxisGrid>
                {axisRows.map((r) => (
                  <React.Fragment key={r.label}>
                    {r.label === "Scale factors:" && <LockButton aria-label="Lock proportions"><Lock /></LockButton>}
                    <AxisLabel $wide={r.wide}>{r.label}</AxisLabel>
                    {r.values.map((v, i) => <NumberBox key={i} defaultValue={v} aria-label={`${r.label} ${"XYZ"[i]}`} />)}
                    <span>{r.unit}</span>
                    {r.reset ? <ResetButton aria-label={`Reset ${r.label}`}><Undo /></ResetButton> : <span />}
                  </React.Fragment>
                ))}
              </AxisGrid>
              <InchesRow><CheckLabel><DarkCheck type="checkbox" />Inches</CheckLabel></InchesRow>
            </Group>

            <Group>
              <legend>Info</legend>
              <InfoList>
                <span>Size:</span><span>22.20 x 16.10 x 3.50</span><span>Volume:</span><span>626.01</span>
                <span>Facets:</span><span>72080 (1 shell)</span><span /><span />
                <p>No errors detected</p>
              </InfoList>
            </Group>
            <SliceButton>Slice now</SliceButton>
          </Side>
        </Main>
      </Shell>
    </>
  );
}
